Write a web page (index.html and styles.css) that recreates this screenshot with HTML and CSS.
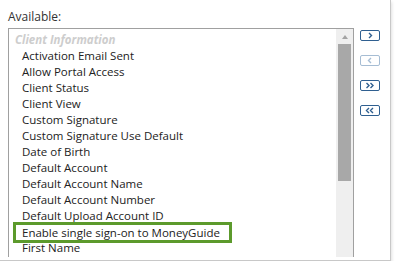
FILE: index.html
```html
<!DOCTYPE html>
<html lang="en">
<head>
  <meta charset="UTF-8" />
  <title>Available fields</title>
  <link rel="stylesheet" href="styles.css">
</head>
<body>
  <div class="panel">
    <div class="picker">
      <div class="label">Available:</div>
      <div class="listbox">
        <div class="items">
          <div class="group">Client Information</div>
          <div class="item">Activation Email Sent</div>
          <div class="item">Allow Portal Access</div>
          <div class="item">Client Status</div>
          <div class="item">Client View</div>
          <div class="item">Custom Signature</div>
          <div class="item">Custom Signature Use Default</div>
          <div class="item">Date of Birth</div>
          <div class="item">Default Account</div>
          <div class="item">Default Account Name</div>
          <div class="item">Default Account Number</div>
          <div class="item">Default Upload Account ID</div>
          <div class="item"><span class="callout">Enable single sign-on to MoneyGuide</span></div>
          <div class="item">First Name</div>
        </div>
        <div class="scrollbar">
          <div class="arrow"></div>
          <div class="thumb"></div>
        </div>
      </div>
    </div>

    <div class="moves">
      <button class="move">
        <svg width="8" height="7" viewBox="0 0 8 7"><path d="M3 1 L5.5 3.5 L3 6" /></svg>
      </button>
      <button class="move disabled">
        <svg width="8" height="7" viewBox="0 0 8 7"><path d="M5 1 L2.5 3.5 L5 6" /></svg>
      </button>
      <button class="move">
        <svg width="10" height="7" viewBox="0 0 10 7"><path d="M1.5 1 L4 3.5 L1.5 6 M5.5 1 L8 3.5 L5.5 6" /></svg>
      </button>
      <button class="move">
        <svg width="10" height="7" viewBox="0 0 10 7"><path d="M4 1 L1.5 3.5 L4 6 M8 1 L5.5 3.5 L8 6" /></svg>
      </button>
    </div>
  </div>
</body>
</html>
```

FILE: styles.css
```css
body {
  margin: 0;
  background: #ffffff;
  font-family: "Open Sans", "Noto Sans", sans-serif;
  font-size: 11.5px;
  color: #222;
}

.panel {
  display: flex;
  width: 391px;
  height: 261px;
  box-sizing: border-box;
  padding: 9px 0 0 8px;
  background: #fff;
  border-right: 1px solid #c8c8c8;
  border-bottom: 1px solid #c8c8c8;
  box-shadow: 1px 2px 3px rgba(0, 0, 0, 0.12);
  overflow: hidden;
}

.picker {
  display: flex;
  flex-direction: column;
  width: 346px;
}

.label {
  height: 16px;
  line-height: 16px;
  margin-bottom: 3px;
  color: #333;
  font-size: 12px;
}

.listbox {
  flex: 1;
  display: flex;
  border: 1px solid #a0a0a0;
  border-bottom: none;
  margin-bottom: 3px;
}

.items {
  flex: 1;
  padding-top: 3px;
}

.group,
.item {
  height: 16px;
  line-height: 16px;
  white-space: nowrap;
}

.group {
  padding-left: 6px;
  font-style: italic;
  font-weight: bold;
  color: #cdcdcd;
}

.item {
  display: flex;
  align-items: center;
  padding-left: 13px;
}

.callout {
  margin: -3px 0 -3px -9px;
  padding: 0 9px 0 6px;
  border: 3px solid #5c9a2c;
  line-height: 15px;
}

.scrollbar {
  width: 17px;
  background: #efefef;
  display: flex;
  flex-direction: column;
  align-items: center;
}

.arrow {
  margin: 6px 0 5px;
  width: 0;
  height: 0;
  border-left: 3.5px solid transparent;
  border-right: 3.5px solid transparent;
  border-bottom: 4px solid #a3a3a3;
}

.thumb {
  width: 13px;
  height: 137px;
  background: #a8a8a8;
}

.moves {
  display: flex;
  flex-direction: column;
  gap: 14px;
  margin-left: 6px;
  padding-top: 21px;
}

.move {
  width: 20px;
  height: 11px;
  padding: 0;
  display: flex;
  align-items: center;
  justify-content: center;
  background: #fff;
  border: 1px solid #2f5f90;
  border-radius: 2px;
}

.move path {
  fill: none;
  stroke: #2f5f90;
  stroke-width: 1.4;
}

.move.disabled {
  border-color: #a6bdd4;
}

.move.disabled path {
  stroke: #a6bdd4;
}
```
